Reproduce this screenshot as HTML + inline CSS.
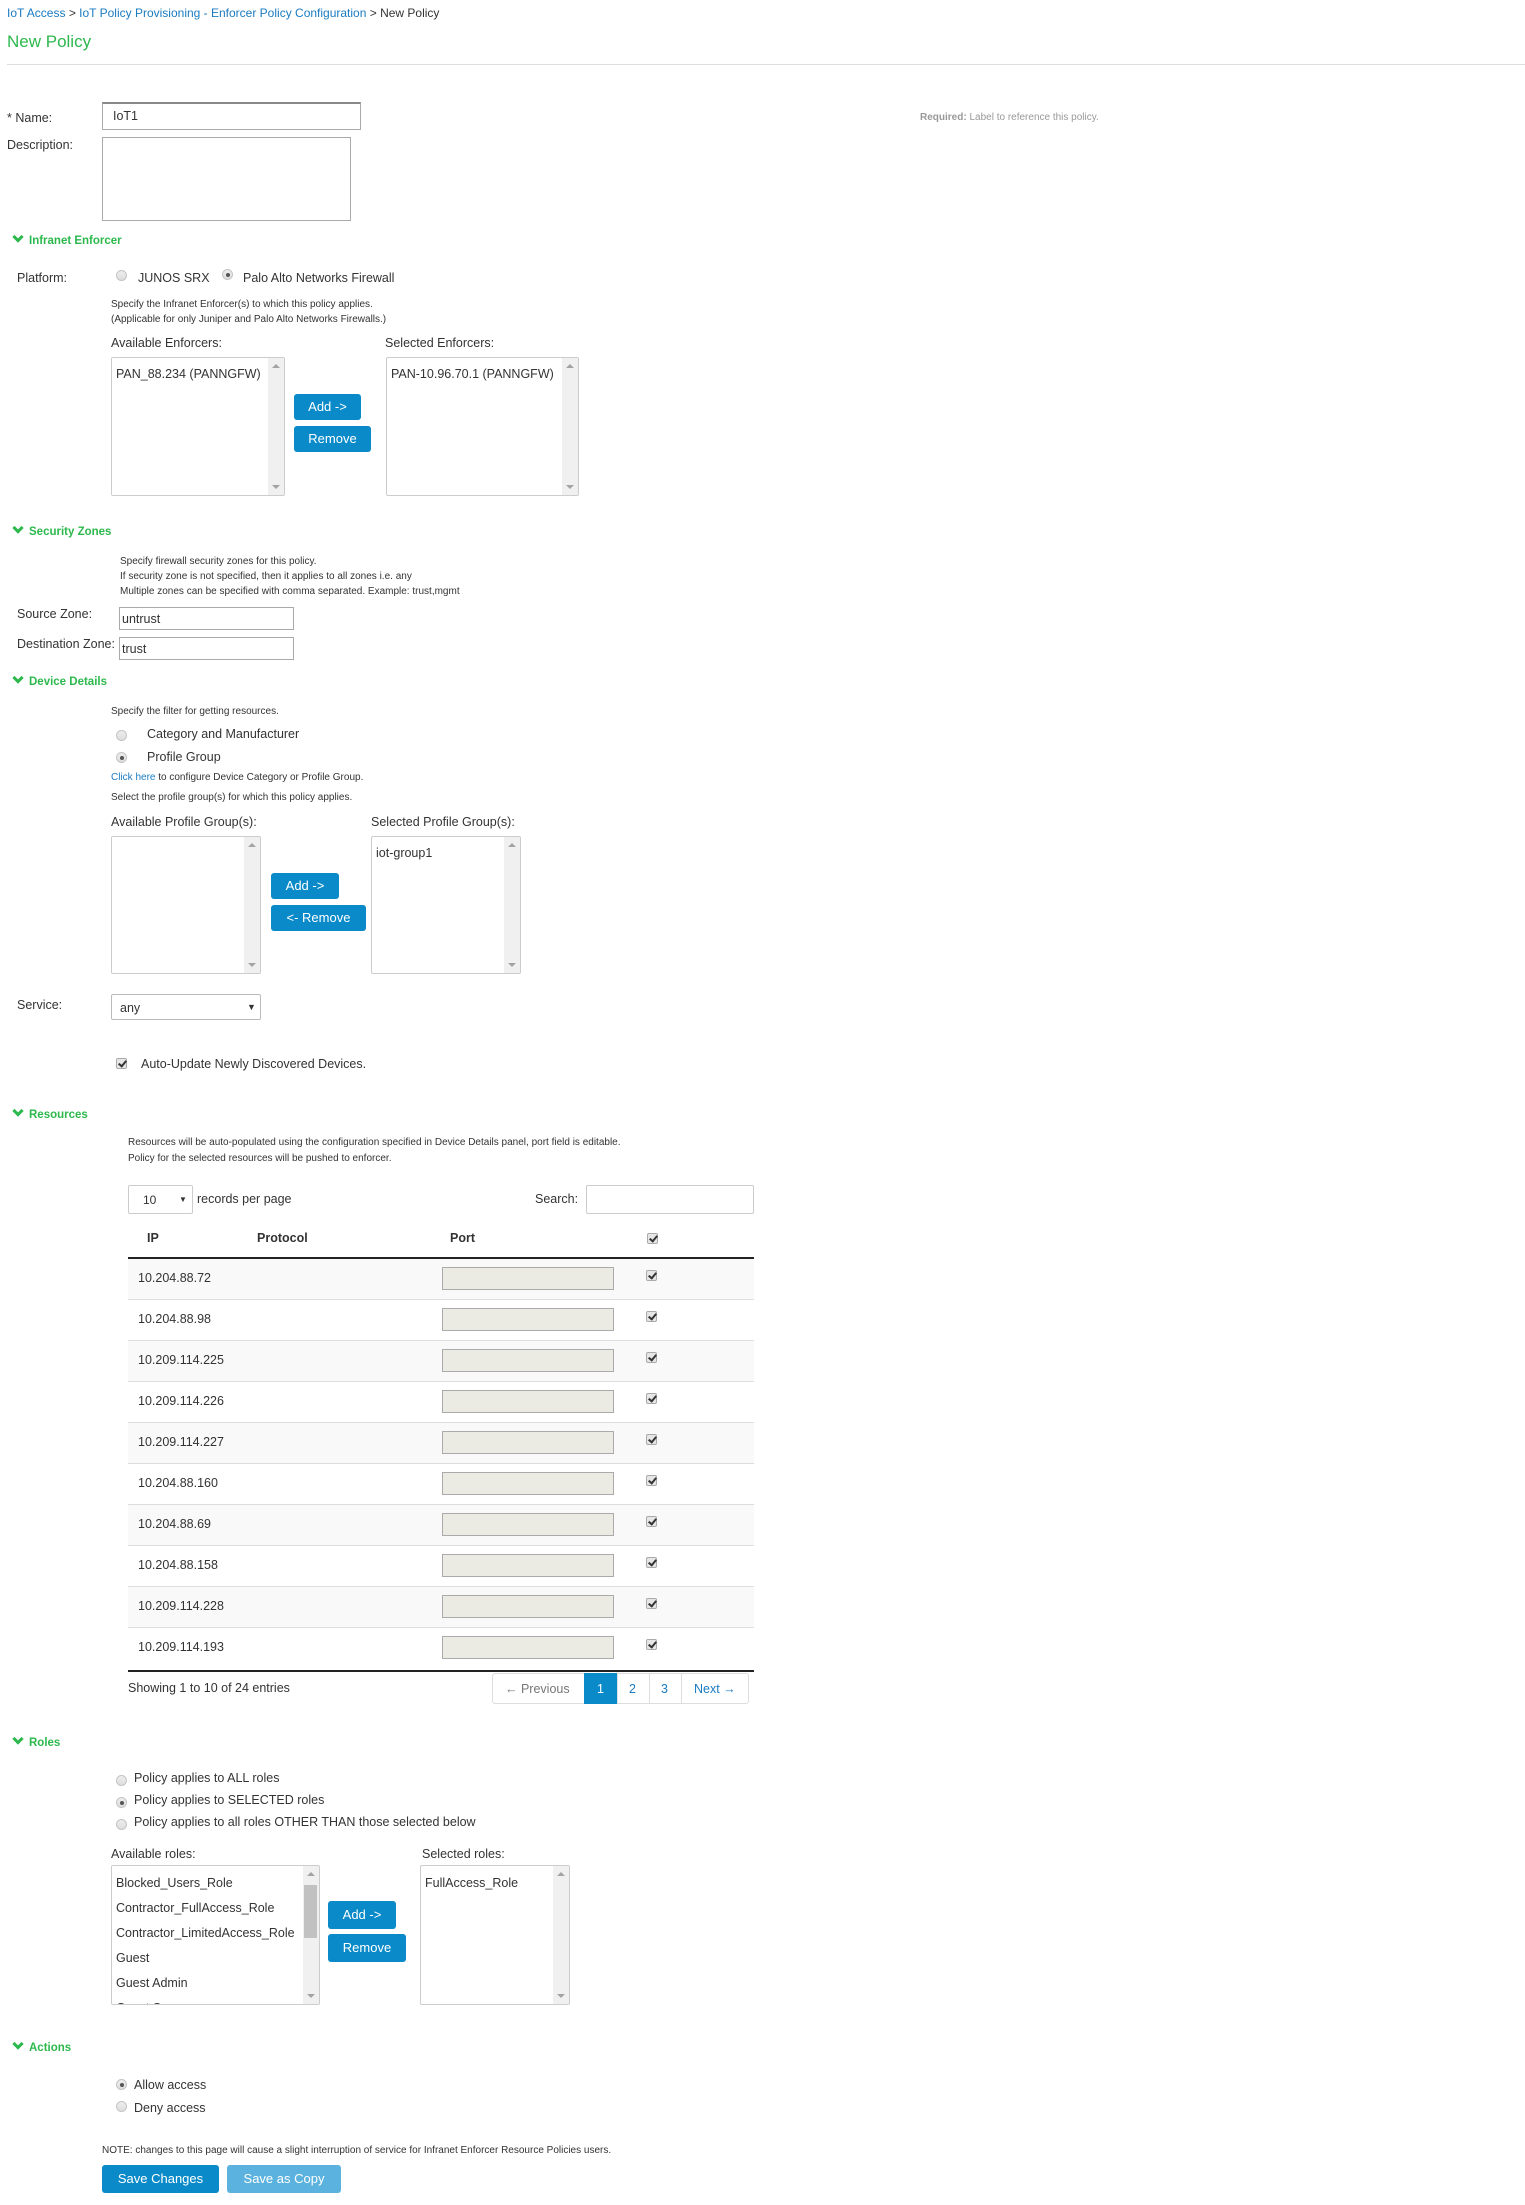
<!DOCTYPE html>
<html><head><meta charset="utf-8"><style>
*{box-sizing:border-box;margin:0;padding:0}
body{width:1525px;height:2205px;background:#fff;font-family:"Liberation Sans",Arial,sans-serif;color:#333;font-size:12.5px;position:relative;overflow:hidden}
.a{position:absolute;white-space:nowrap;line-height:16px}
.s{font-size:10px;line-height:14px}
.h{color:#2db84d;font-weight:bold;font-size:11.5px}
.h:before{content:"";display:inline-block;width:5px;height:5px;border-right:3px solid #2db84d;border-bottom:3px solid #2db84d;transform:rotate(45deg);margin:0 7px 3px 2px}
.box{position:absolute;border:1px solid #bbb;background:#fff}
.lb{position:absolute;border:1px solid #ccc;border-radius:2px;background:#fff;overflow:hidden}
.lb .sb{position:absolute;right:0;top:0;bottom:0;width:16px;background:#f0f0f0}
.lb .sb:before{content:"";position:absolute;left:4px;top:6px;border:4px solid transparent;border-bottom:4px solid #a3a3a3;border-top:0}
.lb .sb:after{content:"";position:absolute;left:4px;bottom:6px;border:4px solid transparent;border-top:4px solid #a3a3a3;border-bottom:0}
.lb .it{position:absolute;left:4px;font-size:12.5px;line-height:16px;white-space:nowrap}
.btn{position:absolute;background:#0a8ac8;color:#fff;border-radius:3px;font-size:13px;text-align:center}
.r{position:absolute;width:11px;height:11px;border-radius:50%;border:1px solid #c4c4c4;background:linear-gradient(#eee,#ddd)}
.r.on:after{content:"";position:absolute;left:2.5px;top:2.5px;width:4px;height:4px;border-radius:50%;background:#555}
.cb{position:absolute;width:11px;height:11px;border:1px solid #aaa;border-radius:2px;background:#e6e6e6}
.cb:after{content:"";position:absolute;left:3px;top:0px;width:3px;height:6px;border-right:2px solid #333;border-bottom:2px solid #333;transform:rotate(40deg)}
.row{position:absolute;left:128px;width:626px;height:41px;border-bottom:1px solid #ddd}
.row.o{background:#f9f9f9}
.pi{position:absolute;left:314px;top:8px;width:172px;height:23px;border:1px solid #aaa;background:#ebebe4}
.row .ip{position:absolute;left:10px;top:12px;font-size:12.5px}
.row .cb{left:518px;top:11px}
</style></head><body>
<div class="a" style="left:7px;top:5px;font-size:12px;color:#1a7bc0">IoT Access <span style="color:#333">&gt;</span> IoT Policy Provisioning - Enforcer Policy Configuration <span style="color:#333">&gt; New Policy</span></div>
<div class="a" style="left:7px;top:32px;font-size:17px;line-height:20px;color:#2db84d">New Policy</div>
<div style="position:absolute;left:7px;top:64px;width:1518px;height:1px;background:#ddd"></div>

<div class="a" style="left:7px;top:110px">* Name:</div>
<div class="box" style="left:102px;top:102px;width:259px;height:28px;border-color:#aaa;border-top:2px solid #888"></div>
<div class="a" style="left:113px;top:108px">IoT1</div>
<div class="a s" style="left:920px;top:111px;color:#999"><b>Required:</b> Label to reference this policy.</div>
<div class="a" style="left:7px;top:137px">Description:</div>
<div class="box" style="left:102px;top:137px;width:249px;height:84px;border-color:#aaa"></div>

<div class="a h" style="left:12px;top:233px">Infranet Enforcer</div>
<div class="a" style="left:17px;top:270px">Platform:</div>
<div class="r" style="left:116px;top:270px"></div>
<div class="a" style="left:138px;top:270px">JUNOS SRX</div>
<div class="r on" style="left:222px;top:269px"></div>
<div class="a" style="left:243px;top:270px">Palo Alto Networks Firewall</div>
<div class="a s" style="left:111px;top:298px">Specify the Infranet Enforcer(s) to which this policy applies.</div>
<div class="a s" style="left:111px;top:313px">(Applicable for only Juniper and Palo Alto Networks Firewalls.)</div>
<div class="a" style="left:111px;top:335px">Available Enforcers:</div>
<div class="a" style="left:385px;top:335px">Selected Enforcers:</div>
<div class="lb" style="left:111px;top:357px;width:174px;height:139px"><div class="sb"></div><div class="it" style="top:8px">PAN_88.234 (PANNGFW)</div></div>
<div class="lb" style="left:386px;top:357px;width:193px;height:139px"><div class="sb"></div><div class="it" style="top:8px">PAN-10.96.70.1 (PANNGFW)</div></div>
<div class="btn" style="left:294px;top:394px;width:67px;height:26px;line-height:26px">Add -&gt;</div>
<div class="btn" style="left:294px;top:426px;width:77px;height:26px;line-height:26px">Remove</div>

<div class="a h" style="left:12px;top:524px">Security Zones</div>
<div class="a s" style="left:120px;top:555px">Specify firewall security zones for this policy.</div>
<div class="a s" style="left:120px;top:570px">If security zone is not specified, then it applies to all zones i.e. any</div>
<div class="a s" style="left:120px;top:585px">Multiple zones can be specified with comma separated. Example: trust,mgmt</div>
<div class="a" style="left:17px;top:606px">Source Zone:</div>
<div class="box" style="left:119px;top:607px;width:175px;height:23px;border-color:#aaa"></div>
<div class="a" style="left:122px;top:611px">untrust</div>
<div class="a" style="left:17px;top:636px">Destination Zone:</div>
<div class="box" style="left:119px;top:637px;width:175px;height:23px;border-color:#aaa"></div>
<div class="a" style="left:122px;top:641px">trust</div>

<div class="a h" style="left:12px;top:674px">Device Details</div>
<div class="a s" style="left:111px;top:705px">Specify the filter for getting resources.</div>
<div class="r" style="left:116px;top:730px"></div>
<div class="a" style="left:147px;top:726px">Category and Manufacturer</div>
<div class="r on" style="left:116px;top:752px"></div>
<div class="a" style="left:147px;top:749px">Profile Group</div>
<div class="a s" style="left:111px;top:771px"><span style="color:#1a7bc0">Click here</span> to configure Device Category or Profile Group.</div>
<div class="a s" style="left:111px;top:791px">Select the profile group(s) for which this policy applies.</div>
<div class="a" style="left:111px;top:814px">Available Profile Group(s):</div>
<div class="a" style="left:371px;top:814px">Selected Profile Group(s):</div>
<div class="lb" style="left:111px;top:836px;width:150px;height:138px"><div class="sb"></div></div>
<div class="lb" style="left:371px;top:836px;width:150px;height:138px"><div class="sb"></div><div class="it" style="top:8px">iot-group1</div></div>
<div class="btn" style="left:271px;top:873px;width:68px;height:26px;line-height:26px">Add -&gt;</div>
<div class="btn" style="left:271px;top:905px;width:95px;height:26px;line-height:26px">&lt;- Remove</div>
<div class="a" style="left:17px;top:997px">Service:</div>
<div class="lb" style="left:111px;top:994px;width:150px;height:26px;border-color:#bbb"></div>
<div class="a" style="left:120px;top:1000px">any</div>
<div class="a" style="left:247px;top:999px;font-size:9px">&#9660;</div>
<div class="cb" style="left:116px;top:1058px"></div>
<div class="a" style="left:141px;top:1056px">Auto-Update Newly Discovered Devices.</div>

<div class="a h" style="left:12px;top:1107px">Resources</div>
<div class="a s" style="left:128px;top:1136px">Resources will be auto-populated using the configuration specified in Device Details panel, port field is editable.</div>
<div class="a s" style="left:128px;top:1152px">Policy for the selected resources will be pushed to enforcer.</div>
<div class="lb" style="left:128px;top:1185px;width:65px;height:29px"></div>
<div class="a" style="left:143px;top:1192px;font-size:12px">10</div>
<div class="a" style="left:179px;top:1192px;font-size:8px">&#9660;</div>
<div class="a" style="left:197px;top:1191px">records per page</div>
<div class="a" style="left:535px;top:1191px">Search:</div>
<div class="lb" style="left:586px;top:1185px;width:168px;height:29px"></div>
<div class="a" style="left:147px;top:1230px;font-weight:bold;color:#333">IP</div>
<div class="a" style="left:257px;top:1230px;font-weight:bold">Protocol</div>
<div class="a" style="left:450px;top:1230px;font-weight:bold">Port</div>
<div class="cb" style="left:647px;top:1233px"></div>
<div style="position:absolute;left:128px;top:1257px;width:626px;height:2px;background:#222"></div>
<div class="row o" style="top:1259px"><div class="ip">10.204.88.72</div><div class="pi"></div><div class="cb"></div></div>
<div class="row" style="top:1300px"><div class="ip">10.204.88.98</div><div class="pi"></div><div class="cb"></div></div>
<div class="row o" style="top:1341px"><div class="ip">10.209.114.225</div><div class="pi"></div><div class="cb"></div></div>
<div class="row" style="top:1382px"><div class="ip">10.209.114.226</div><div class="pi"></div><div class="cb"></div></div>
<div class="row o" style="top:1423px"><div class="ip">10.209.114.227</div><div class="pi"></div><div class="cb"></div></div>
<div class="row" style="top:1464px"><div class="ip">10.204.88.160</div><div class="pi"></div><div class="cb"></div></div>
<div class="row o" style="top:1505px"><div class="ip">10.204.88.69</div><div class="pi"></div><div class="cb"></div></div>
<div class="row" style="top:1546px"><div class="ip">10.204.88.158</div><div class="pi"></div><div class="cb"></div></div>
<div class="row o" style="top:1587px"><div class="ip">10.209.114.228</div><div class="pi"></div><div class="cb"></div></div>
<div class="row" style="top:1628px;border-bottom:0"><div class="ip">10.209.114.193</div><div class="pi"></div><div class="cb"></div></div>
<div style="position:absolute;left:128px;top:1670px;width:626px;height:2px;background:#222"></div>
<div class="a" style="left:128px;top:1680px">Showing 1 to 10 of 24 entries</div>
<div style="position:absolute;left:492px;top:1673px;width:257px;height:31px;border:1px solid #ddd;border-radius:3px"></div>
<div class="a" style="left:505px;top:1681px;color:#777">&#8592; Previous</div>
<div style="position:absolute;left:584px;top:1673px;width:33px;height:31px;background:#0a8ac8"></div>
<div class="a" style="left:597px;top:1681px;color:#fff">1</div>
<div style="position:absolute;left:617px;top:1673px;width:1px;height:31px;background:#ddd"></div>
<div class="a" style="left:629px;top:1681px;color:#1a7bc0">2</div>
<div style="position:absolute;left:649px;top:1673px;width:1px;height:31px;background:#ddd"></div>
<div class="a" style="left:661px;top:1681px;color:#1a7bc0">3</div>
<div style="position:absolute;left:681px;top:1673px;width:1px;height:31px;background:#ddd"></div>
<div class="a" style="left:694px;top:1681px;color:#1a7bc0">Next &#8594;</div>

<div class="a h" style="left:12px;top:1735px">Roles</div>
<div class="r" style="left:116px;top:1775px"></div>
<div class="a" style="left:134px;top:1770px">Policy applies to ALL roles</div>
<div class="r on" style="left:116px;top:1797px"></div>
<div class="a" style="left:134px;top:1792px">Policy applies to SELECTED roles</div>
<div class="r" style="left:116px;top:1819px"></div>
<div class="a" style="left:134px;top:1814px">Policy applies to all roles OTHER THAN those selected below</div>
<div class="a" style="left:111px;top:1846px">Available roles:</div>
<div class="a" style="left:422px;top:1846px">Selected roles:</div>
<div class="lb" style="left:111px;top:1865px;width:209px;height:140px"><div class="sb"><div style="position:absolute;left:1px;top:19px;width:13px;height:53px;background:#c1c1c1"></div></div>
<div class="it" style="top:9px">Blocked_Users_Role</div><div class="it" style="top:34px">Contractor_FullAccess_Role</div><div class="it" style="top:59px">Contractor_LimitedAccess_Role</div><div class="it" style="top:84px">Guest</div><div class="it" style="top:109px">Guest Admin</div><div class="it" style="top:134px">Guest Sponsor</div></div>
<div class="lb" style="left:420px;top:1865px;width:150px;height:140px"><div class="sb"></div><div class="it" style="top:9px">FullAccess_Role</div></div>
<div class="btn" style="left:328px;top:1901px;width:68px;height:28px;line-height:28px">Add -&gt;</div>
<div class="btn" style="left:328px;top:1934px;width:78px;height:28px;line-height:28px">Remove</div>

<div class="a h" style="left:12px;top:2040px">Actions</div>
<div class="r on" style="left:116px;top:2079px"></div>
<div class="a" style="left:134px;top:2077px">Allow access</div>
<div class="r" style="left:116px;top:2101px"></div>
<div class="a" style="left:134px;top:2100px">Deny access</div>
<div class="a s" style="left:102px;top:2144px">NOTE: changes to this page will cause a slight interruption of service for Infranet Enforcer Resource Policies users.</div>
<div class="btn" style="left:102px;top:2165px;width:117px;height:28px;line-height:28px">Save Changes</div>
<div class="btn" style="left:227px;top:2165px;width:114px;height:28px;line-height:28px;background:#5cb2de">Save as Copy</div>
</body></html>
